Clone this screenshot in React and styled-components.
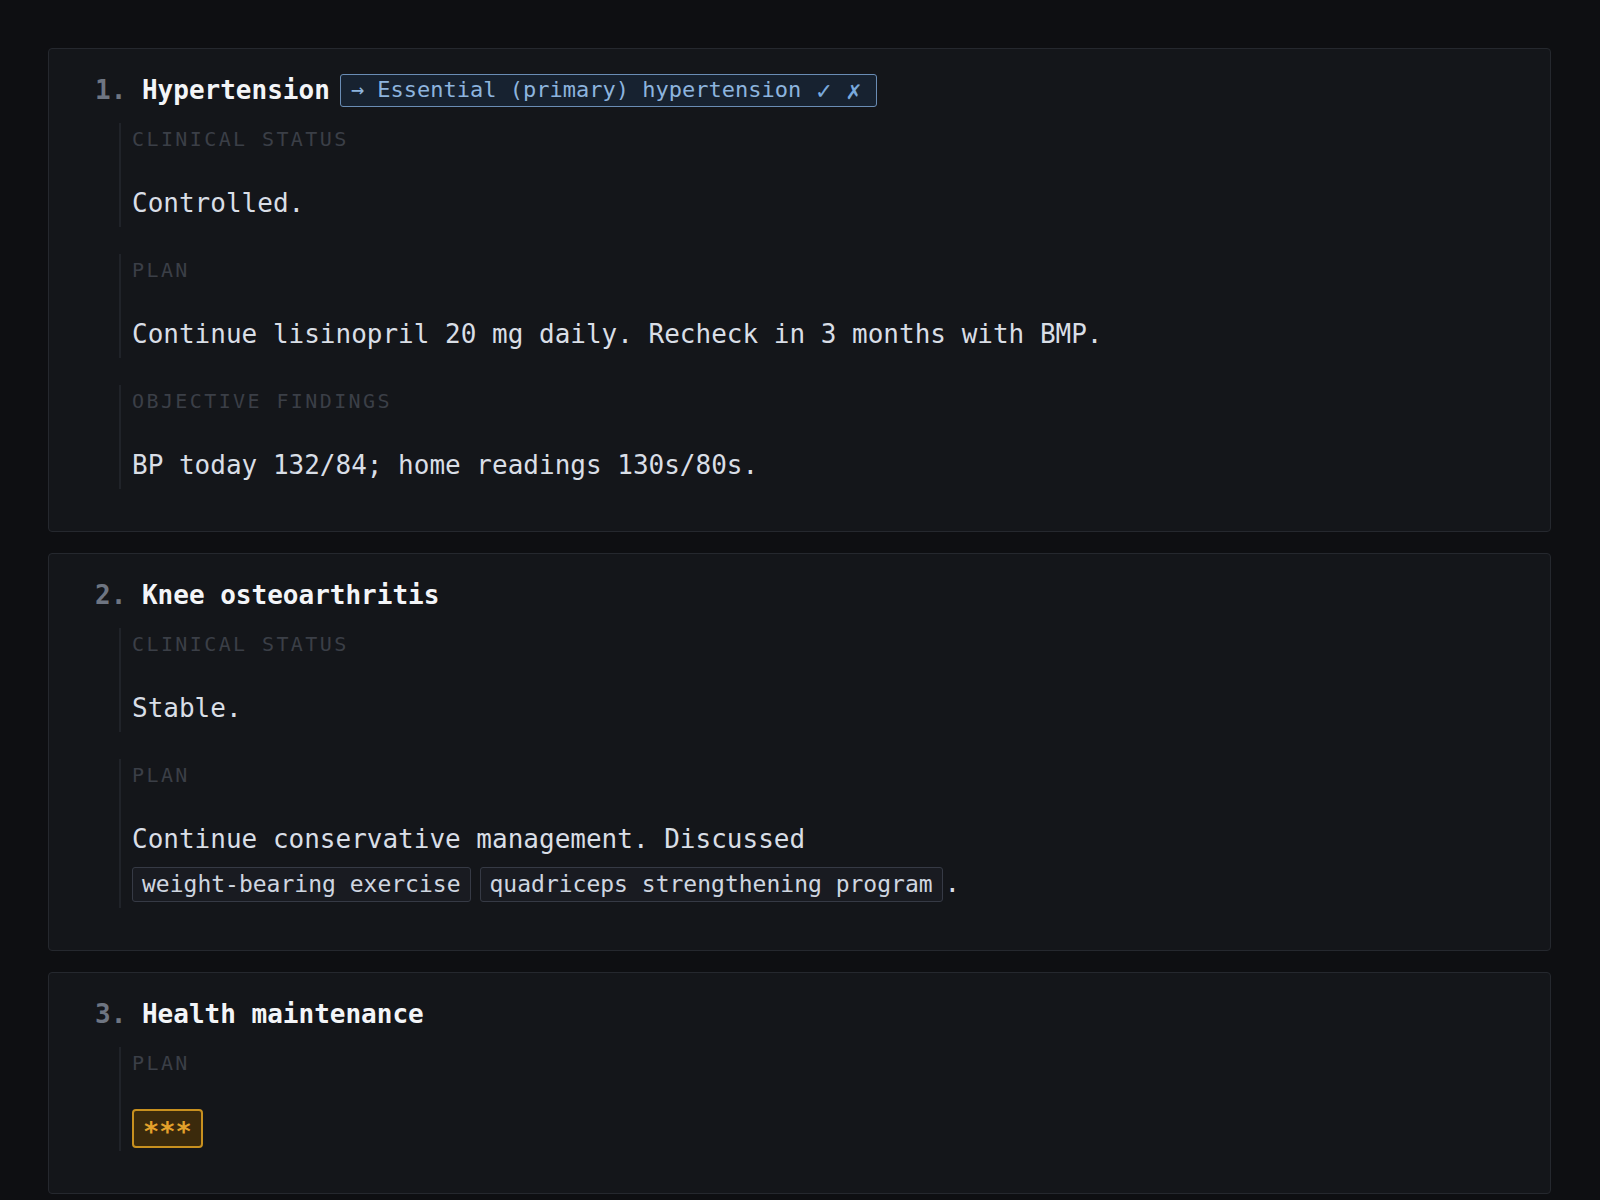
import React from "react";
import styled, { createGlobalStyle } from "styled-components";

const problems = [
  {
    title: "Hypertension",
    code: "Essential (primary) hypertension",
    sections: [
      { label: "Clinical status", body: "Controlled." },
      { label: "Plan", body: "Continue lisinopril 20 mg daily. Recheck in 3 months with BMP." },
      { label: "Objective findings", body: "BP today 132/84; home readings 130s/80s." },
    ],
  },
  {
    title: "Knee osteoarthritis",
    sections: [
      { label: "Clinical status", body: "Stable." },
      {
        label: "Plan",
        body: "Continue conservative management. Discussed",
        chips: ["weight-bearing exercise", "quadriceps strengthening program"],
      },
    ],
  },
  {
    title: "Health maintenance",
    sections: [{ label: "Plan", placeholder: "***" }],
  },
];

const App = () => {
  return (
    <>
      <GlobalStyle />
      <Page>
        {problems.map((p, i) => (
          <Card key={p.title}>
            <Heading>
              <Num>{i + 1}.</Num>
              <Title>{p.title}</Title>
              {p.code && (
                <CodeBadge>
                  <span>→ {p.code}</span>
                  <BadgeAction>✓</BadgeAction>
                  <BadgeAction>✗</BadgeAction>
                </CodeBadge>
              )}
            </Heading>
            <Sections>
              {p.sections.map((s) => (
                <Section key={s.label}>
                  <Label>{s.label}</Label>
                  {s.body && <Body>{s.body}</Body>}
                  {s.chips && (
                    <ChipRow>
                      {s.chips.map((c) => (
                        <Chip key={c}>{c}</Chip>
                      ))}
                      .
                    </ChipRow>
                  )}
                  {s.placeholder && (
                    <Body>
                      <Placeholder>{s.placeholder}</Placeholder>
                    </Body>
                  )}
                </Section>
              ))}
            </Sections>
          </Card>
        ))}
      </Page>
    </>
  );
};

export default App;

const GlobalStyle = createGlobalStyle`
  body {
    margin: 0;
    background: #0e0f12;
    font-family: "DejaVu Sans Mono", "Liberation Mono", monospace;
  }
`;

const Page = styled.div`
  display: flex;
  flex-direction: column;
  gap: 21px;
  padding: 48px 49px 48px 48px;
`;

const Card = styled.div`
  background: #14161a;
  border: 1px solid #25282e;
  border-radius: 4px;
  padding: 24px 46px 42px;
`;

const Heading = styled.div`
  display: flex;
  align-items: center;
  font-size: 26px;
  font-weight: 700;
  line-height: 34px;
`;

const Num = styled.span`
  color: #6e7582;
  margin-right: 1ch;
`;

const Title = styled.span`
  color: #f3f5f8;
`;

const CodeBadge = styled.span`
  display: inline-flex;
  align-items: center;
  margin-left: 10px;
  height: 33px;
  padding: 0 15px 0 10px;
  box-sizing: border-box;
  border: 1.5px solid #6a8db5;
  border-radius: 3px;
  background: #172230;
  color: #8db4de;
  font-size: 22px;
  font-weight: 400;
`;

const BadgeAction = styled.span`
  margin-left: 15px;
  font-size: 25px;
  line-height: 1;
  color: #79a9dc;
`;

const Sections = styled.div`
  display: flex;
  flex-direction: column;
  gap: 27px;
  margin: 16px 0 0 24px;
`;

const Section = styled.div`
  border-left: 2px solid #202329;
  padding: 4px 0 2px 11px;
`;

const Label = styled.div`
  font-size: 20px;
  line-height: 24px;
  letter-spacing: 2.4px;
  text-transform: uppercase;
  color: #3b3f47;
  margin-bottom: 30px;
`;

const Body = styled.div`
  font-size: 26px;
  line-height: 44px;
  color: #d9dee6;
`;

const ChipRow = styled.div`
  font-size: 26px;
  line-height: 45px;
  color: #d9dee6;
`;

const Chip = styled.span`
  display: inline-block;
  vertical-align: middle;
  line-height: 33px;
  padding: 0 9px;
  margin-right: 9px;
  font-size: 23px;
  color: #cfd6e0;
  background: #191b21;
  border: 1px solid #363a45;
  border-radius: 3px;

  & + & {
    margin-right: 2px;
  }
`;

const Placeholder = styled.span`
  display: inline-block;
  vertical-align: middle;
  line-height: 29px;
  padding: 6px 9px 0;
  font-size: 27px;
  font-weight: 700;
  color: #e3a12b;
  background: #3b2a0c;
  border: 2px solid #c8901f;
  border-radius: 4px;
`;
